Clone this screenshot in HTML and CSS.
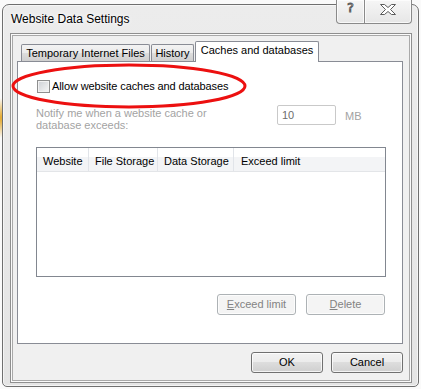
FILE: index.html
```html
<!DOCTYPE html>
<html lang="en">
<head>
    <meta charset="UTF-8">
    <title>Website Data Settings</title>
    <link rel="stylesheet" href="styles.css">
</head>
<body>
<div class="window">
    <div class="titlebar">
        <span class="title">Website Data Settings</span>
        <div class="caption-btns">
            <span class="cap help">?</span>
            <span class="cap close">
                <svg width="16" height="11" viewBox="0 0 16 11">
                    <polygon points="0.5,0.5 4.5,0.5 8,3.5 11.5,0.5 15.5,0.5 10.5,5.5 15.5,10.5 11.5,10.5 8,7.5 4.5,10.5 0.5,10.5 5.5,5.5" fill="#fff" stroke="#5b5b5b" stroke-width="1"/>
                </svg>
            </span>
        </div>
    </div>
    <div class="client">
        <div class="tabs">
            <span class="tab tab-temp">Temporary Internet Files</span>
            <span class="tab tab-history">History</span>
            <span class="tab active">Caches and databases</span>
        </div>
        <div class="panel">
            <div class="check-row">
                <span class="checkbox"></span>
                <span>Allow website caches and databases</span>
            </div>
            <div class="notify-row">
                <span class="notify-text">Notify me when a website cache or<br>database exceeds:</span>
                <span class="mb-input">10</span>
                <span class="mb">MB</span>
            </div>
            <div class="list">
                <div class="list-head">
                    <span class="col col-site">Website</span>
                    <span class="col col-file">File Storage</span>
                    <span class="col col-data">Data Storage</span>
                    <span class="col col-limit">Exceed limit</span>
                </div>
            </div>
            <div class="panel-btns">
                <span class="btn disabled"><u>E</u>xceed limit</span>
                <span class="btn disabled"><u>D</u>elete</span>
            </div>
        </div>
        <div class="dialog-btns">
            <span class="btn small">OK</span>
            <span class="btn small">Cancel</span>
        </div>
    </div>
</div>
<svg class="annotation" width="421" height="389" viewBox="0 0 421 389">
    <ellipse cx="129" cy="86" rx="116" ry="21" fill="none" stroke="#ec1010" stroke-width="3"/>
</svg>
</body>
</html>
```

FILE: styles.css
```css
* {
    margin: 0;
    padding: 0;
}

body {
    position: relative;
    width: 421px;
    height: 389px;
    overflow: hidden;
    font-family: "Liberation Sans", Arial, sans-serif;
    font-size: 11px;
    color: #000;
    background: radial-gradient(4px 20px at 1px 118px, #e2a21c, rgba(226, 162, 28, 0)), #fafafa;
}

.window {
    box-sizing: border-box;
    width: 417px;
    height: 383px;
    margin: 4px 0 0 2px;
    border: 1px solid #6f6f6f;
    border-radius: 7px 7px 5px 5px;
    background: linear-gradient(#ececec, #e4e4e4);
    box-shadow: inset 0 0 0 1px rgba(255, 255, 255, 0.6);
    display: flex;
    flex-direction: column;
}

/* title bar */
.titlebar {
    height: 28px;
    display: flex;
    align-items: center;
    padding-left: 8px;
}

.title {
    font-size: 12px;
    text-shadow: 0 0 6px #fff, 0 0 3px #fff;
}

.caption-btns {
    display: flex;
    align-self: flex-start;
    margin: -5px 6px 0 auto;
    height: 24px;
}

.cap {
    box-sizing: border-box;
    height: 24px;
    border: 1px solid #8a8a8a;
    border-top: none;
    background: linear-gradient(#f6f6f6, #e6e6e6);
    display: flex;
    justify-content: center;
    box-shadow: inset 0 0 0 1px rgba(255, 255, 255, 0.7);
}

.help {
    width: 29px;
    border-radius: 0 0 0 4px;
    font-family: "DejaVu Sans", sans-serif;
    font-size: 13px;
    line-height: 15px;
    color: #fff;
    -webkit-text-stroke: 0.9px #5b5b5b;
}

.close {
    width: 47px;
    border-left: none;
    border-radius: 0 0 4px 0;
    padding-top: 4px;
}

/* client area */
.client {
    flex: 1;
    margin: 0 6px 3px 7px;
    border: 1px solid #8f8f8f;
    box-shadow: inset 0 0 0 1px #fafafa, inset 0 0 0 2px #a9a9a9;
    background: #f0f0f0;
    padding: 7px 8px 9px 6px;
    display: flex;
    flex-direction: column;
}

.tabs {
    display: flex;
    align-items: flex-end;
    gap: 1px;
    height: 20px;
    padding-left: 4px;
    position: relative;
    z-index: 1;
}

.tab {
    box-sizing: border-box;
    height: 17px;
    border: 1px solid #898c95;
    border-bottom: none;
    border-radius: 2px 2px 0 0;
    background: linear-gradient(#f3f3f3 0%, #ebebeb 50%, #dddddd 50%, #cfcfcf 100%);
    text-align: center;
    line-height: 16px;
    white-space: nowrap;
}

.tab-temp {
    width: 129px;
}

.tab-history {
    width: 43px;
}

.tab.active {
    width: 124px;
    height: 21px;
    margin-bottom: -1px;
    background: #fff;
    line-height: 17px;
}

.panel {
    box-sizing: border-box;
    height: 283px;
    border: 1px solid #898c95;
    background: #fff;
    padding: 18px 0 0 18px;
    display: flex;
    flex-direction: column;
    align-items: flex-start;
}

.check-row {
    display: flex;
    align-items: center;
    height: 13px;
    line-height: 13px;
    letter-spacing: -0.1px;
}

.checkbox {
    box-sizing: border-box;
    width: 13px;
    height: 13px;
    margin: 0 2px 0 1px;
    border: 1px solid #8e8f8f;
    background: linear-gradient(135deg, #cdd0d5, #f7f7f7);
    box-shadow: inset 0 0 0 1px #f2f2f2;
}

.notify-row {
    display: flex;
    align-items: flex-start;
    margin-top: 14px;
    color: #a3a3a3;
}

.notify-text {
    width: 241px;
    line-height: 12px;
}

.mb-input {
    box-sizing: border-box;
    width: 59px;
    height: 20px;
    margin-top: -2px;
    padding-left: 4px;
    border: 1px solid #c9c9c9;
    border-radius: 2px;
    background: #fff;
    color: #6d6d6d;
    line-height: 18px;
}

.mb {
    margin-left: 9px;
    line-height: 18px;
}

.list {
    box-sizing: border-box;
    width: 350px;
    height: 130px;
    margin-top: 16px;
    border: 1px solid #828790;
    background: #fff;
}

.list-head {
    box-sizing: border-box;
    display: flex;
    height: 24px;
    border-bottom: 1px solid #e3e5e8;
    background: linear-gradient(#fff 0%, #fff 40%, #f3f4f6 40%, #f3f4f6 100%);
}

.col {
    box-sizing: border-box;
    padding: 4px 0 0 6px;
    line-height: 18px;
    border-right: 1px solid #e1e4e9;
    white-space: nowrap;
}

.col-site {
    width: 52px;
}

.col-file {
    width: 69px;
}

.col-data {
    width: 76px;
}

.col-limit {
    flex: 1;
    border-right: none;
    padding-left: 7px;
}

/* buttons */
.panel-btns {
    display: flex;
    justify-content: flex-end;
    gap: 10px;
    width: 349px;
    margin-top: 17px;
}

.btn {
    box-sizing: border-box;
    width: 79px;
    height: 21px;
    border: 1px solid #707070;
    border-radius: 3px;
    background: linear-gradient(#f2f2f2 0%, #ebebeb 50%, #dddddd 50%, #cfcfcf 100%);
    box-shadow: inset 0 0 0 1px rgba(255, 255, 255, 0.75);
    text-align: center;
    line-height: 19px;
}

.btn.disabled {
    border-color: #adb2b5;
    background: #f4f4f4;
    color: #838383;
}

.btn.small {
    width: 72px;
}

.dialog-btns {
    display: flex;
    justify-content: flex-end;
    gap: 8px;
    margin-top: 8px;
}

.annotation {
    position: absolute;
    left: 0;
    top: 0;
    pointer-events: none;
}
```
